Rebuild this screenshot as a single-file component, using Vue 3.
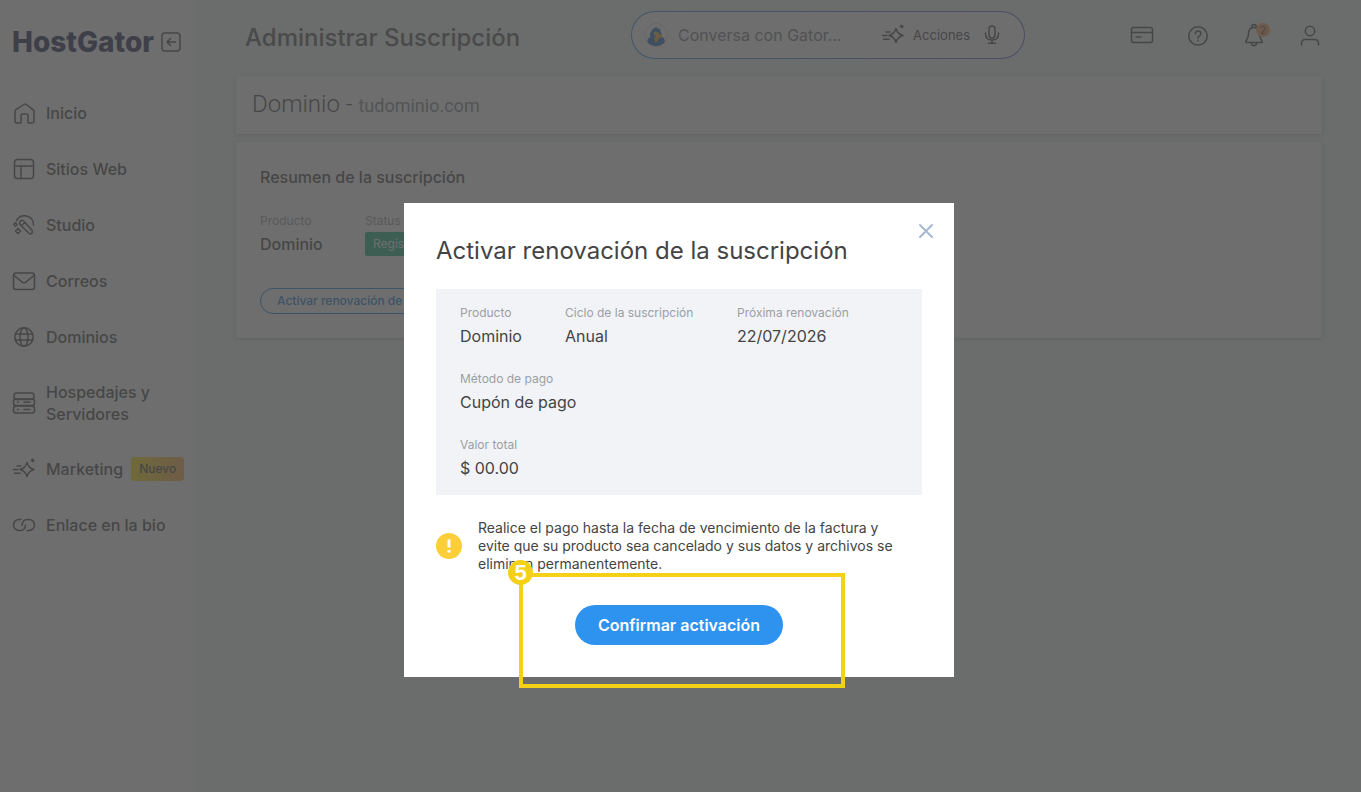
<script setup>
import { ref } from 'vue'

const message = ref('')

const navItems = [
  { icon: 'home', label: 'Inicio' },
  { icon: 'layout', label: 'Sitios Web' },
  { icon: 'wand', label: 'Studio' },
  { icon: 'mail', label: 'Correos' },
  { icon: 'globe', label: 'Dominios' },
  { icon: 'server', label: 'Hospedajes y Servidores' },
  { icon: 'spark', label: 'Marketing', tag: 'Nuevo' },
  { icon: 'link', label: 'Enlace en la bio' }
]

const details = [
  [
    { label: 'Producto', value: 'Dominio' },
    { label: 'Ciclo de la suscripción', value: 'Anual' },
    { label: 'Próxima renovación', value: '22/07/2026' }
  ],
  [{ label: 'Método de pago', value: 'Cupón de pago' }],
  [{ label: 'Valor total', value: '$ 00.00' }]
]
</script>

<template>
  <div class="app">
    <aside class="sidebar">
      <div class="brand">
        <a href="#" class="logo">HostGator</a>
        <button class="icon-btn" aria-label="Contraer menú">
          <svg class="collapse" viewBox="0 0 20 20">
            <rect x="1" y="1" width="18" height="18" rx="3" />
            <path d="M14.500 10H6M9.500 6.500 6 10l3.500 3.500" />
          </svg>
        </button>
      </div>
      <nav class="nav">
        <a v-for="item in navItems" :key="item.label" href="#" class="nav-item">
          <svg class="icon" viewBox="0 0 24 24">
            <g v-if="item.icon === 'home'">
              <path d="M3 10.500v9.500q0 2 2 2h3q1 0 1-1v-6q0-2 2-2h3q2 0 2 2v6q0 1 1 1h3q2 0 2-2v-9.500q0-1-1-1.800l-6.800-5.200q-1.200-.9-2.400 0L4 8.700q-1 .8-1 1.800z" />
            </g>
            <g v-else-if="item.icon === 'layout'">
              <rect x="2.500" y="2.500" width="19" height="19" rx="3" />
              <path d="M2.500 9h19M9 9v12.500" />
            </g>
            <g v-else-if="item.icon === 'wand'">
              <path d="M4.500 7.500C9 0 21.500 1.500 21.500 12" />
              <path d="M8 8.500q2-2.500 4 0l8 8.800q1 1.500-.2 2.900-1.500 1.300-2.900.1L8 11.500q-1-1.500 0-3zM10 12l3-2.500" />
              <path d="m3.500 9.800 1.700 1.700-1.700 1.700-1.700-1.700zM6 15.500l2.500 2.500L6 20.500 3.500 18z" />
            </g>
            <g v-else-if="item.icon === 'mail'">
              <rect x="1.500" y="4" width="21" height="16.500" rx="2.500" />
              <path d="m2 6.500 8.500 6.800q1.500 1.200 3 0L22 6.500" />
            </g>
            <g v-else-if="item.icon === 'globe'">
              <circle cx="12" cy="12" r="9.200" />
              <ellipse cx="12" cy="12" rx="4" ry="9.200" />
              <path d="M3.300 9h17.400M3.300 15h17.400" />
            </g>
            <g v-else-if="item.icon === 'server'">
              <rect x="2" y="2" width="20" height="6.500" rx="2.500" />
              <rect x="1.500" y="8" width="21" height="6.500" rx="2.500" />
              <rect x="1.500" y="15" width="21" height="7" rx="2.500" />
              <path d="M5.500 11.200h.8M12 11.200h6M5.500 18.500h.8M12 18.500h6" />
            </g>
            <g v-else-if="item.icon === 'spark'">
              <path d="M15 5.500q1.500 5.500 7 7-5.500 1.500-7 7-1.500-5.500-7-7 5.500-1.500 7-7zM5 9h4M1.500 12.500H6M2.500 16.200H8" />
              <path class="solid" d="m20.800 2 1.600 1.600-1.600 1.600-1.600-1.600z" />
            </g>
            <g v-else>
              <path d="M9 6.500H7a5.500 5.500 0 0 0 0 11h1.500q4.500 0 5-5.500" />
              <path d="M10 12.500q.5-6 5.500-6H17a5.500 5.500 0 0 1 0 11h-2" />
            </g>
          </svg>
          <span>{{ item.label }}</span>
          <span v-if="item.tag" class="tag-new">{{ item.tag }}</span>
        </a>
      </nav>
    </aside>

    <main class="main">
      <header class="topbar">
        <h1 class="page-title">Administrar Suscripción</h1>
        <div class="search">
          <svg class="avatar" viewBox="0 0 24 24">
            <circle class="ring" cx="12" cy="12" r="11.500" />
            <path class="blue" d="M3.500 19q-.5-4 3-5-1.500-3 .5-5 .5-3 3-3.500L12 4l1.500 1.500L16 6l.5 2.500L18 11l-1 2.500 3 1.500 1 4q-3.500 4-9 4-5.500 0-8.500-4z" />
            <path class="gold" d="M10 8.500l4 .5 1.500 2.500L18 10v3.500l-2 2h-1.500L14 18l-2.500 1.500L10 16l1.500-3.500-2-1.500z" />
          </svg>
          <input v-model="message" class="search-input" type="text" placeholder="Conversa con Gator..." aria-label="Conversa con Gator" />
          <button class="actions-btn">
            <svg class="icon" viewBox="0 0 24 24">
              <path d="M15 5.500q1.500 5.500 7 7-5.500 1.500-7 7-1.500-5.500-7-7 5.500-1.500 7-7zM5 9h4M1.500 12.500H6M2.500 16.200H8" />
              <path class="solid" d="m20.800 2 1.600 1.600-1.600 1.600-1.600-1.600z" />
            </svg>
            Acciones
          </button>
          <button class="icon-btn" aria-label="Dictar">
            <svg class="mic" viewBox="0 0 20 20">
              <rect x="7" y="1" width="6" height="12" rx="3" />
              <path d="M3.500 8v1q0 6 6.500 6t6.500-6V8M10 15v3M6.500 18.200h7" />
            </svg>
          </button>
        </div>
        <div class="tools">
          <button class="icon-btn" aria-label="Pagos">
            <svg class="icon" viewBox="0 0 24 24">
              <rect x="1.500" y="4.500" width="21" height="15" rx="2" />
              <path d="M1.500 9.500h21M6 14h5" />
            </svg>
          </button>
          <button class="icon-btn" aria-label="Ayuda">
            <svg class="icon" viewBox="0 0 24 24">
              <circle cx="12" cy="13" r="9.200" />
              <path d="M9.300 10.800q0-2.800 2.800-2.800t2.800 2.500q0 1.500-1.500 2.300T12 15M12 17.300v.6" />
            </svg>
          </button>
          <button class="icon-btn bell" aria-label="Notificaciones">
            <svg class="icon" viewBox="0 0 24 24">
              <path d="M12 4.500c-4 0-5.500 3-5.500 6.500 0 3.500-1 4.500-2.500 7q-.8 1.500.5 1.500h15q1.300 0 .5-1.500c-1.500-2.500-2.500-3.500-2.500-7 0-3.500-1.500-6.500-5.500-6.500zM9.500 5q0-3.500 2.500-3.500T14.500 5M9.500 20q0 2.800 2.500 2.800t2.500-2.800" />
            </svg>
            <span class="count">2</span>
          </button>
          <button class="icon-btn" aria-label="Cuenta">
            <svg class="icon" viewBox="0 0 24 24">
              <circle cx="12" cy="8" r="4.700" />
              <path d="M3.500 22v-1.500q0-4 4-4h9q4 0 4 4V22" />
            </svg>
          </button>
        </div>
      </header>

      <section class="card product">
        <h2 class="product-name">Dominio - <span class="domain">tudominio.com</span></h2>
      </section>

      <section class="card summary">
        <h3 class="summary-title">Resumen de la suscripción</h3>
        <div class="field-row">
          <div class="field">
            <span class="label">Producto</span>
            <span class="value strong">Dominio</span>
          </div>
          <div class="field">
            <span class="label">Status</span>
            <span class="status">Registrado</span>
          </div>
        </div>
        <button class="renew-btn">Activar renovación de la suscripción</button>
      </section>
    </main>

    <div class="overlay">
      <section class="modal" role="dialog" aria-modal="true" aria-labelledby="modal-title">
        <button class="icon-btn close" aria-label="Cerrar">
          <svg viewBox="0 0 16 16"><path d="m2 2 12 12M14 2 2 14" /></svg>
        </button>
        <h2 id="modal-title" class="modal-title">Activar renovación de la suscripción</h2>
        <div class="panel">
          <div v-for="(row, i) in details" :key="i" class="field-row">
            <div v-for="f in row" :key="f.label" class="field">
              <span class="label">{{ f.label }}</span>
              <span class="value">{{ f.value }}</span>
            </div>
          </div>
        </div>
        <div class="notice">
          <svg class="warn" viewBox="0 0 26 26">
            <circle cx="13" cy="13" r="13" />
            <path d="M13 6.500v8M13 17v2.500" />
          </svg>
          <p>Realice el pago hasta la fecha de vencimiento de la factura y evite que su producto sea cancelado y sus datos y archivos se eliminen permanentemente.</p>
        </div>
        <button class="confirm-btn">Confirmar activación</button>
        <div class="step-frame"><span class="step-number">5</span></div>
      </section>
    </div>
  </div>
</template>

<style>
body {
  margin: 0;
}
</style>

<style scoped>
.app {
  display: flex;
  min-height: 100vh;
  background: #ebf8f3;
  color: #4b4b4b;
  font-family: Inter, "Liberation Sans", sans-serif;
  font-size: 16px;
}
.app * {
  box-sizing: border-box;
}
h1, h2, h3, p {
  margin: 0;
}
a {
  color: inherit;
  text-decoration: none;
}
button {
  font-family: inherit;
  color: inherit;
  padding: 0;
  border: 0;
  background: none;
  cursor: pointer;
}
svg {
  display: block;
  flex: none;
  fill: none;
  stroke: currentColor;
  stroke-width: 1.5;
  stroke-linecap: round;
  stroke-linejoin: round;
}
.icon {
  width: 24px;
  height: 24px;
}
.solid {
  fill: currentColor;
  stroke-width: 1;
}
.icon-btn {
  display: flex;
}
.sidebar {
  flex: 0 0 196px;
  background: #fff;
}
.brand {
  display: flex;
  align-items: center;
  gap: 8px;
  height: 85px;
  padding: 0 0 2px 12px;
}
.logo {
  width: 141px;
  color: #2a2a58;
  font-size: 28px;
  font-weight: 800;
}
.collapse {
  width: 20px;
  height: 20px;
}
.nav-item {
  display: flex;
  align-items: center;
  min-height: 56px;
  padding: 16px 8px 16px 12px;
  gap: 10px;
  font-weight: 500;
  line-height: 22px;
}
.tag-new {
  margin-left: -2px;
  padding: 0 8px;
  border-radius: 4px;
  background: linear-gradient(90deg, #ffe812, #ffac52);
  font-size: 12px;
  line-height: 24px;
}
.main {
  flex: 1;
  min-width: 0;
  padding: 0 39px 0 40px;
}
.topbar {
  display: flex;
  align-items: center;
  height: 70px;
  margin-bottom: 6px;
  padding-left: 9px;
}
.page-title {
  flex: 0 0 386px;
  padding-top: 6px;
  color: #5a5a5a;
  font-size: 24px;
  font-weight: 500;
  line-height: 32px;
}
.search {
  display: flex;
  align-items: center;
  flex: 0 1 394px;
  min-width: 0;
  height: 48px;
  padding: 0 22px 0 12px;
  border: 1px solid transparent;
  border-radius: 24px;
  background: linear-gradient(#fff, #fff) padding-box, linear-gradient(90deg, #2e93ee, #7060d8) border-box;
}
.avatar {
  width: 24px;
  height: 24px;
}
.avatar path {
  stroke: none;
}
.ring {
  stroke: #ddd;
  stroke-width: 1;
}
.blue {
  fill: #2474c8;
}
.gold {
  fill: #f0b23c;
}
.search-input {
  flex: 1;
  width: 0;
  min-width: 0;
  margin-left: 10px;
  padding: 0;
  border: 0;
  outline: 0;
  background: none;
  font-family: inherit;
  font-size: 16px;
}
.search-input::placeholder {
  color: #7c7c7c;
}
.actions-btn {
  display: flex;
  align-items: center;
  gap: 8px;
  margin-right: 12px;
  font-size: 13px;
}
.mic {
  width: 20px;
  height: 20px;
}
.tools {
  display: flex;
  gap: 32px;
  margin-left: auto;
}
.bell {
  position: relative;
}
.count {
  position: absolute;
  top: 0;
  right: -4px;
  width: 14px;
  border-radius: 7px;
  background: #ffa468;
  font-size: 10px;
  line-height: 14px;
  text-align: center;
}
.card {
  background: #fff;
  border-radius: 2px;
  box-shadow: 0 1px 4px rgba(0, 0, 0, 0.2);
}
.product {
  margin-bottom: 8px;
  padding: 12px 16px;
}
.product-name {
  font-family: Roboto, sans-serif;
  font-size: 24px;
  font-weight: 300;
  line-height: 32px;
}
.domain {
  color: #858b90;
  font-size: 18px;
  font-weight: 400;
}
.summary {
  padding: 24px;
}
.summary-title {
  margin-bottom: 25px;
  font-size: 16px;
  font-weight: 500;
  line-height: 22px;
}
.field-row {
  display: grid;
  grid-template-columns: 105px 172px auto;
}
.field-row .field:only-child {
  grid-column: 1 / -1;
}
.field {
  display: flex;
  flex-direction: column;
  align-items: flex-start;
  gap: 3px;
}
.label {
  color: #9b9fa3;
  font-size: 12px;
  line-height: 16px;
}
.value {
  line-height: 24px;
}
.strong {
  font-weight: 500;
}
.status {
  padding: 0 8px;
  border-radius: 2px;
  background: #22b583;
  color: #fff;
  font-size: 12px;
  line-height: 24px;
}
.renew-btn {
  display: block;
  margin-top: 32px;
  padding: 0 16px;
  border: 1px solid #1f80e0;
  border-radius: 13px;
  color: #1f80e0;
  font-size: 12px;
  font-weight: 500;
  line-height: 24px;
}
.overlay {
  position: fixed;
  inset: 0;
  display: flex;
  align-items: flex-start;
  justify-content: center;
  padding: 203px 3px 0 0;
  background: rgba(69, 69, 69, 0.78);
}
.modal {
  position: relative;
  width: 550px;
  padding: 32px;
  background: #fff;
  color: #444;
}
.close {
  position: absolute;
  top: 20px;
  right: 20px;
  color: #a5b8d3;
}
.close svg {
  width: 16px;
  height: 16px;
  stroke-width: 2;
}
.modal-title {
  margin-bottom: 22px;
  font-size: 24px;
  font-weight: 400;
  line-height: 32px;
}
.panel {
  display: grid;
  gap: 23px;
  padding: 16px 24px 15px;
  background: #f1f3f7;
}
.notice {
  display: flex;
  align-items: center;
  gap: 16px;
  margin: 24px 0 32px;
  padding-right: 16px;
  font-size: 14px;
  line-height: 18px;
}
.warn {
  width: 26px;
  height: 26px;
}
.warn circle {
  fill: #fccf3a;
  stroke: none;
}
.warn path {
  stroke: #fff;
  stroke-width: 3;
  stroke-linecap: butt;
}
.confirm-btn {
  display: block;
  width: 208px;
  margin: 0 auto;
  border-radius: 20px;
  background: #2e93ee;
  color: #fff;
  font-size: 16px;
  font-weight: 600;
  line-height: 40px;
}
.step-frame {
  position: absolute;
  left: 115px;
  bottom: -11px;
  width: 326px;
  height: 115px;
  border: 4px solid #f4d016;
  pointer-events: none;
}
.step-number {
  position: absolute;
  top: -17px;
  left: -15px;
  width: 25px;
  border-radius: 50%;
  background: #f4d016;
  color: #fff;
  font-family: "Liberation Sans", sans-serif;
  font-size: 22px;
  font-weight: 700;
  line-height: 25px;
  text-align: center;
}
</style>
